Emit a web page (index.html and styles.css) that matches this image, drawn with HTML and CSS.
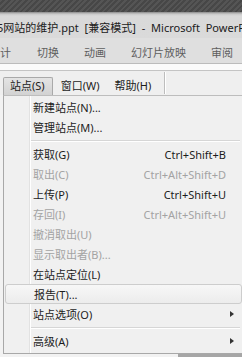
FILE: index.html
```html
<!DOCTYPE html>
<html>
<head>
<meta charset="utf-8">
<link rel="stylesheet" href="styles.css">
</head>
<body>
<div class="titlebar"></div>
<div class="caption"><span class="caption-text">5网站的维护.ppt [兼容模式] - Microsoft PowerPo</span></div>
<div class="tabs">
  <span class="tab first">计</span>
  <span class="tab">切换</span>
  <span class="tab">动画</span>
  <span class="tab">幻灯片放映</span>
  <span class="tab">审阅</span>
</div>
<div class="strip"></div>
<div class="menubar">
  <span class="menubar-item active">站点(S)</span>
  <span class="menubar-item">窗口(W)</span>
  <span class="menubar-item">帮助(H)</span>
  <span class="menubar-sep"></span>
</div>
<div class="menu">
  <div class="item"><span class="label">新建站点(N)...</span></div>
  <div class="item"><span class="label">管理站点(M)...</span></div>
  <div class="sep"></div>
  <div class="item"><span class="label">获取(G)</span><span class="key">Ctrl+Shift+B</span></div>
  <div class="item disabled"><span class="label">取出(C)</span><span class="key">Ctrl+Alt+Shift+D</span></div>
  <div class="item"><span class="label">上传(P)</span><span class="key">Ctrl+Shift+U</span></div>
  <div class="item disabled"><span class="label">存回(I)</span><span class="key">Ctrl+Alt+Shift+U</span></div>
  <div class="item disabled"><span class="label">撤消取出(U)</span></div>
  <div class="item disabled"><span class="label">显示取出者(B)...</span></div>
  <div class="item"><span class="label">在站点定位(L)</span></div>
  <div class="item hover"><span class="label">报告(T)...</span></div>
  <div class="item"><span class="label">站点选项(O)</span><span class="arrow"></span></div>
  <div class="sep"></div>
  <div class="item"><span class="label">高级(A)</span><span class="arrow"></span></div>
</div>
<div class="bottom"><span class="bottom-dark"></span></div>
</body>
</html>
```
FILE: styles.css
```css
body {
  margin: 0;
  width: 242px;
  height: 357px;
  overflow: hidden;
  background: #f2f2f2;
  font-family: "Noto Sans", "Noto Sans CJK SC", sans-serif;
  font-size: 11px;
  color: #1c1c1c;
}

/* dark window frame at the very top */
.titlebar {
  height: 12px;
  background-color: #4d4d4d;
  background-image: repeating-linear-gradient(135deg, #555 0, #555 2px, #474747 2px, #474747 4px);
}

.caption {
  height: 26px;
  display: flex;
  align-items: center;
  padding-top: 3px;
  box-sizing: border-box;
  background: linear-gradient(#8a8a8a 0, #c8c8c8 2px, #d9d9d9 4px, #dadada);
  white-space: nowrap;
  overflow: hidden;
}

.caption-text {
  margin-left: -3px;
  font-size: 11px;
  word-spacing: 3px;
  color: #202020;
}

/* ribbon tab names */
.tabs {
  height: 25px;
  display: flex;
  align-items: center;
  gap: 25px;
  padding-top: 3px;
  box-sizing: border-box;
  background: #dfdfdf;
  color: #5e5e5e;
  font-size: 11px;
  white-space: nowrap;
  overflow: hidden;
}

.tab.first {
  margin-right: 1px;
}

.strip {
  height: 8px;
  box-sizing: border-box;
  border-top: 1px solid #bcbcbc;
  border-bottom: 1px solid #c4c4c4;
  background: #fbfbfb;
}

.menubar {
  height: 24px;
  display: flex;
  align-items: flex-end;
  padding-left: 3px;
  box-sizing: border-box;
  background: #efefef;
}

.menubar-item {
  height: 17px;
  line-height: 16px;
  padding: 0 7px 0 6px;
  margin-right: 2px;
  white-space: nowrap;
}

.menubar-item.active {
  border: 1px solid #a9a9a9;
  border-bottom: none;
  border-radius: 2px 2px 0 0;
  background: linear-gradient(#e4e4e4, #d2d2d2);
}

.menubar-sep {
  width: 1px;
  height: 22px;
  margin-left: 4px;
  margin-bottom: 1px;
  background: #bdbdbd;
  box-shadow: 1px 0 0 #fff;
}

/* the dropdown */
.menu {
  width: 240px;
  margin-left: 3px;
  padding: 1px 0 2px;
  border: 1px solid #a8a8a8;
  border-top-color: #bdbdbd;
  background: #f0f0f0;
  background-image: linear-gradient(90deg, transparent 25px, #e2e2e2 25px, #e2e2e2 26px, #fff 26px, #fff 27px, transparent 27px);
  box-sizing: border-box;
}

.item {
  height: 20px;
  display: flex;
  align-items: center;
  padding-left: 29px;
  padding-right: 16px;
  box-sizing: border-box;
  white-space: nowrap;
}

.item .label {
  flex: 1;
}

.item .key {
  text-align: right;
}

.item.disabled {
  color: #a3a3a3;
}

.item.hover {
  margin: 0 0 0 1px;
  border: 1px solid #cdcdcd;
  border-radius: 3px;
  padding-left: 28px;
  background: linear-gradient(#f7f7f7, #ececec);
}

.arrow {
  width: 0;
  height: 0;
  margin-right: -8px;
  border-top: 3px solid transparent;
  border-bottom: 3px solid transparent;
  border-left: 4px solid #333;
}

.sep {
  height: 7px;
  margin-left: 27px;
  margin-right: 2px;
  background: linear-gradient(transparent 3px, #d6d6d6 3px, #d6d6d6 4px, #fff 4px, #fff 5px, transparent 5px);
}

.bottom {
  height: 4px;
  display: flex;
  justify-content: flex-end;
}

.bottom-dark {
  width: 64px;
  background: #a6a6a6;
}
```
